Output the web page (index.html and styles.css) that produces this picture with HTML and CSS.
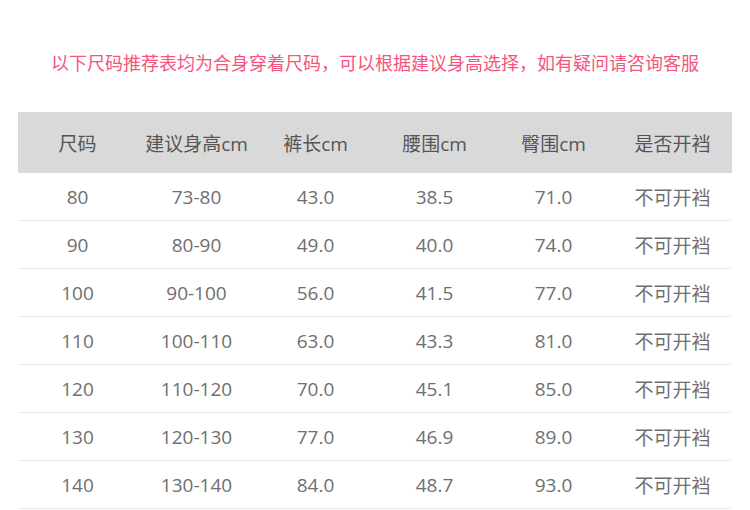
FILE: index.html
```html
<!DOCTYPE html>
<html lang="zh">
<head>
<meta charset="utf-8">
<link rel="stylesheet" href="styles.css">
</head>
<body>
<div class="page">
  <p class="note">以下尺码推荐表均为合身穿着尺码，可以根据建议身高选择，如有疑问请咨询客服</p>
  <table class="size">
    <thead>
      <tr><th>尺码</th><th>建议身高cm</th><th>裤长cm</th><th>腰围cm</th><th>臀围cm</th><th>是否开裆</th></tr>
    </thead>
    <tbody>
      <tr><td>80</td><td>73-80</td><td>43.0</td><td>38.5</td><td>71.0</td><td>不可开裆</td></tr>
      <tr><td>90</td><td>80-90</td><td>49.0</td><td>40.0</td><td>74.0</td><td>不可开裆</td></tr>
      <tr><td>100</td><td>90-100</td><td>56.0</td><td>41.5</td><td>77.0</td><td>不可开裆</td></tr>
      <tr><td>110</td><td>100-110</td><td>63.0</td><td>43.3</td><td>81.0</td><td>不可开裆</td></tr>
      <tr><td>120</td><td>110-120</td><td>70.0</td><td>45.1</td><td>85.0</td><td>不可开裆</td></tr>
      <tr><td>130</td><td>120-130</td><td>77.0</td><td>46.9</td><td>89.0</td><td>不可开裆</td></tr>
      <tr><td>140</td><td>130-140</td><td>84.0</td><td>48.7</td><td>93.0</td><td>不可开裆</td></tr>
    </tbody>
  </table>
</div>
</body>
</html>
```
FILE: styles.css
```css
html, body {
  margin: 0;
  padding: 0;
  background: #ffffff;
}
.page {
  width: 750px;
  padding: 0 18px;
  box-sizing: border-box;
  font-family: "Open Sans", "Noto Sans CJK SC", sans-serif;
}
.note {
  margin: 0;
  padding-top: 49px;
  height: 112px;
  box-sizing: border-box;
  text-align: center;
  color: #f6547e;
  font-size: 18px;
  line-height: 26px;
  font-family: "Noto Sans CJK SC", sans-serif;
}
.size {
  width: 714px;
  border-collapse: collapse;
  table-layout: fixed;
}
.size th {
  background: #d9d9d9;
  height: 61px;
  padding: 0;
  font-weight: normal;
  font-size: 19px;
  color: #555555;
  text-align: center;
}
.size td {
  height: 47px;
  padding: 0;
  border-bottom: 1px solid #ececec;
  font-size: 19px;
  color: #6f6f6f;
  text-align: center;
}
```
